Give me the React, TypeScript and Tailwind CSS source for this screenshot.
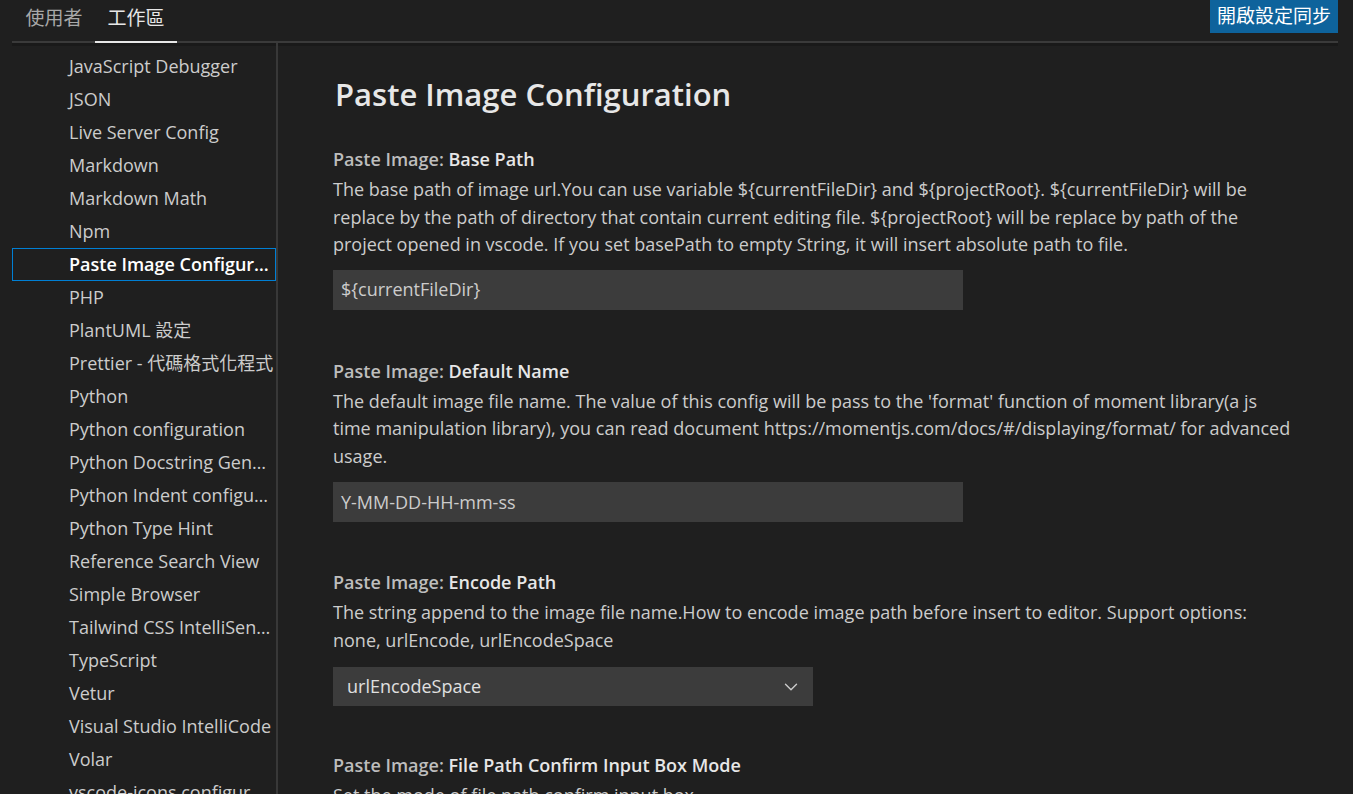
import { ChevronDown } from "lucide-react";

const font = "font-['Open_Sans','Noto_Sans_CJK_TC',sans-serif]";

const navItems = [
  "JavaScript Debugger",
  "JSON",
  "Live Server Config",
  "Markdown",
  "Markdown Math",
  "Npm",
  "Paste Image Configuration",
  "PHP",
  "PlantUML 設定",
  "Prettier - 代碼格式化程式",
  "Python",
  "Python configuration",
  "Python Docstring Generator configuration",
  "Python Indent configuration",
  "Python Type Hint",
  "Reference Search View",
  "Simple Browser",
  "Tailwind CSS IntelliSense",
  "TypeScript",
  "Vetur",
  "Visual Studio IntelliCode",
  "Volar",
  "vscode-icons configuration",
];

function SettingLabel({ name }: { name: string }) {
  return (
    <div className="h-[28px] leading-[28px] font-semibold whitespace-nowrap">
      <span className="text-[#bdbdbd]">Paste Image: </span>
      <span className="text-[#e7e7e7]">{name}</span>
    </div>
  );
}

function Desc({ lines }: { lines: string[] }) {
  return (
    <div className="mt-[3px] text-[#cccccc] leading-[27.5px]">
      {lines.map((l) => (
        <div key={l} className="whitespace-nowrap">
          {l}
        </div>
      ))}
    </div>
  );
}

export default function App() {
  return (
    <div className={`${font} w-[1353px] h-[794px] overflow-hidden bg-[#1f1f1f] text-[18px] flex flex-col`}>
      {/* header */}
      <div className="flex items-start h-[41px] pl-[13px]">
        <div className="flex h-full">
          <div className="w-[82px] h-full flex items-center justify-center text-[#a8a8a8] text-[19px] pb-[5px]">使用者</div>
          <div className="w-[82px] h-full flex items-center justify-center text-[#e7e7e7] text-[19px] pb-[5px]">工作區</div>
        </div>
        <div className="flex-1" />
        <button className="mr-[15px] h-[33px] px-[7px] bg-[#0e639c] text-white text-[19px] leading-[33px]">開啟設定同步</button>
      </div>
      <div className="ml-[12px] mr-[15px] h-[2px] bg-[#3a3a3a] flex">
        <div className="ml-[83px] w-[82px] h-[2px] bg-[#e7e7e7]" />
      </div>
      <div className="ml-[12px] mr-[15px] h-[3px] bg-[#191919]" />

      <div className="flex flex-1 min-h-0 -mt-[3px]">
        {/* sidebar */}
        <div className="ml-[12px] w-[266px] pt-[7px] border-r-2 border-[#383838] shrink-0">
          {navItems.map((item) => {
            const active = item === "Paste Image Configuration";
            return (
              <div
                key={item}
                className={`h-[33px] leading-[31px] pl-[56px] pr-[1px] truncate border ${
                  active ? "border-[#007fd4] text-white font-semibold" : "border-transparent text-[#cccccc]"
                }`}
              >
                {item}
              </div>
            );
          })}
        </div>

        {/* content */}
        <div className="flex-1 pl-[55px] pt-[29px]">
          <h1 className="text-[31px] font-semibold text-[#e7e7e7] leading-[44px] pl-[2px]">Paste Image Configuration</h1>

          <div className="mt-[29px]">
            <SettingLabel name="Base Path" />
            <Desc
              lines={[
                "The base path of image url.You can use variable ${currentFileDir} and ${projectRoot}. ${currentFileDir} will be",
                "replace by the path of directory that contain current editing file. ${projectRoot} will be replace by path of the",
                "project opened in vscode. If you set basePath to empty String, it will insert absolute path to file.",
              ]}
            />
            <div className="mt-[11px] w-[630px] h-[40px] bg-[#3c3c3c] text-[#cccccc] pl-[8px] flex items-center">
              {"${currentFileDir}"}
            </div>
          </div>

          <div className="mt-[47px]">
            <SettingLabel name="Default Name" />
            <Desc
              lines={[
                "The default image file name. The value of this config will be pass to the 'format' function of moment library(a js",
                "time manipulation library), you can read document https://momentjs.com/docs/#/displaying/format/ for advanced",
                "usage.",
              ]}
            />
            <div className="mt-[12px] w-[630px] h-[40px] bg-[#3c3c3c] text-[#cccccc] pl-[8px] flex items-center">
              Y-MM-DD-HH-mm-ss
            </div>
          </div>

          <div className="mt-[46px]">
            <SettingLabel name="Encode Path" />
            <Desc
              lines={[
                "The string append to the image file name.How to encode image path before insert to editor. Support options:",
                "none, urlEncode, urlEncodeSpace",
              ]}
            />
            <div className="mt-[13px] w-[480px] h-[39px] bg-[#3c3c3c] text-[#e0e0e0] pl-[14px] pr-[11px] flex items-center justify-between">
              <span>urlEncodeSpace</span>
              <ChevronDown size={22} strokeWidth={1.5} className="text-[#cccccc]" />
            </div>
          </div>

          <div className="mt-[45px]">
            <SettingLabel name="File Path Confirm Input Box Mode" />
            <Desc lines={["Set the mode of file path confirm input box."]} />
          </div>
        </div>
      </div>
    </div>
  );
}
